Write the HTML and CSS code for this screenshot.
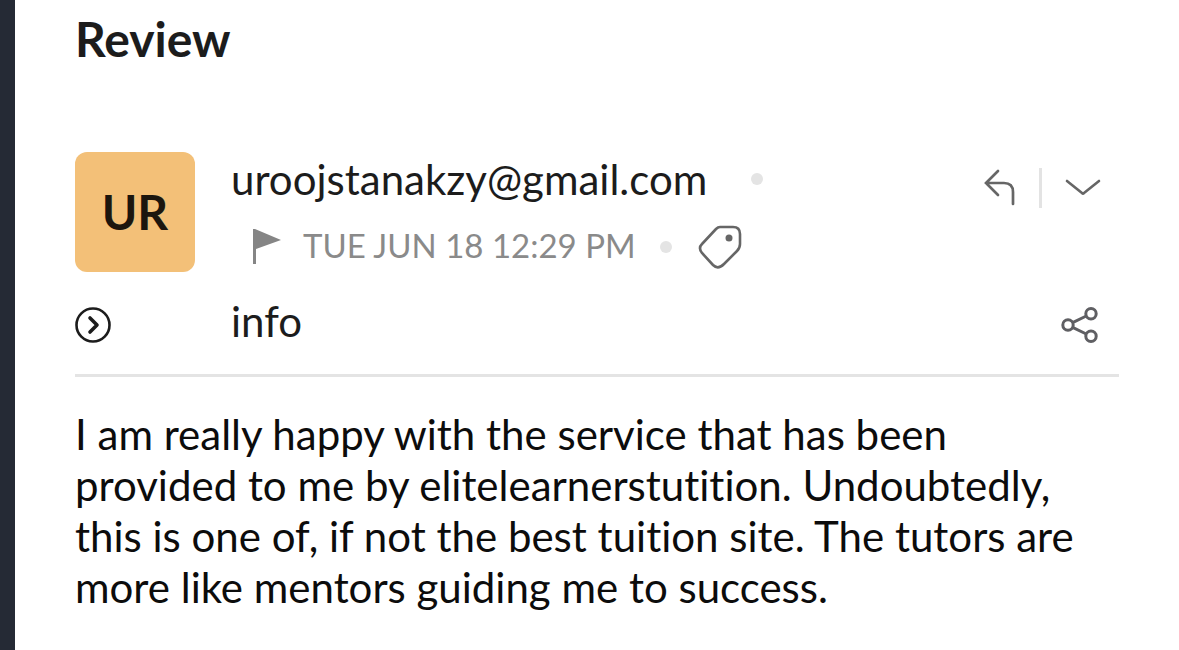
FILE: index.html
```html
<!DOCTYPE html>
<html lang="en">
<head>
<meta charset="UTF-8" />
<meta name="viewport" content="width=device-width, initial-scale=1" />
<title>Review</title>
<link rel="stylesheet" href="styles.css">
</head>
<body>

<main class="mail">
  <h1>Review</h1>

  <header class="mail-header">
    <div class="avatar">UR</div>

    <div class="sender">
      <div class="sender-line">
        <span class="address">uroojstanakzy@gmail.com</span>
        <span class="dot"></span>
      </div>
      <div class="meta-line">
        <button class="flag" aria-label="Flag">
          <svg width="28" height="36" viewBox="0 0 28 36"><path d="M0 0h2l26 11L3 20v15H0z" fill="#858585"/></svg>
        </button>
        <time>TUE JUN 18 12:29 PM</time>
        <span class="dot"></span>
        <button class="tag" aria-label="Tag">
          <svg width="44" height="44" viewBox="0 0 44 44" fill="none" stroke="#666" stroke-width="2.600"><path d="M22 2H35Q42 2 42 9V19Q42 23 39 26L26 39Q20 45 15 40L4 28Q0 23 4 19L18 4Q20 2 22 2Z"/><circle cx="31" cy="13" r="3.500" fill="#666" stroke="none"/></svg>
        </button>
      </div>
    </div>

    <div class="actions">
      <button class="reply" aria-label="Reply">
        <svg width="32" height="38" viewBox="0 0 32 38" fill="none" stroke="#666" stroke-width="2.700" stroke-linecap="round"><path d="M15 2L3 14l12 12M3 14h18q9 0 9 9v12"/></svg>
      </button>
      <button class="more" aria-label="More actions">
        <svg width="36" height="18" viewBox="0 0 36 18" fill="none" stroke="#666" stroke-width="2.600" stroke-linecap="round" stroke-linejoin="round"><path d="M2 2l15 12q1 1 2 0L34 2"/></svg>
      </button>
    </div>
  </header>

  <div class="recipient">
    <button class="expand" aria-label="Show details">
      <svg width="36" height="36" viewBox="0 0 36 36" fill="none" stroke="#1c1c1c" stroke-width="2.600" stroke-linecap="round" stroke-linejoin="round"><circle cx="18" cy="18" r="16.500"/><path d="M15 11l7 7-7 7" stroke-width="3.600"/></svg>
    </button>
    <span class="to">info</span>
    <button class="share" aria-label="Share">
      <svg width="38" height="36" viewBox="0 0 38 36" fill="none" stroke="#5f5f63" stroke-width="3"><circle cx="7" cy="18" r="5.200"/><circle cx="30" cy="6.700" r="5.200"/><circle cx="30" cy="29.300" r="5.200"/><path d="M11.600 15.600l13.700-6.600M11.600 20.400l13.700 6.600"/></svg>
    </button>
  </div>

  <p class="message">I am really happy with the service that has been provided to me by elitelearnerstutition. Undoubtedly, this is one of, if not the best tuition site. The tutors are more like mentors guiding me to success.</p>
</main>

</body>
</html>
```
FILE: styles.css
```css
* {
  box-sizing: border-box;
}
body {
  margin: 0;
  font-family: Lato, sans-serif;
  font-variant-ligatures: none;
  background: white;
  color: #1c1c1c;
}
button {
  display: flex;
  padding: 0;
  border: none;
  background: none;
  cursor: pointer;
}
.mail {
  min-height: 100vh;
  padding: 11px 60px 36px;
  border-left: 15px solid #252a35;
}
h1 {
  margin: 0 0 85px;
  font-size: 48px;
  line-height: 56px;
}
.mail-header {
  display: flex;
  align-items: flex-start;
}
.avatar {
  width: 120px;
  height: 120px;
  margin-right: 36px;
  border-radius: 12px;
  background: #f3c078;
  color: #1c160e;
  font-size: 48px;
  font-weight: bold;
  line-height: 120px;
  text-align: center;
}
.sender {
  flex: 1;
}
.sender-line {
  display: flex;
  align-items: center;
  height: 54px;
  font-size: 42px;
}
.dot {
  width: 12px;
  height: 12px;
  border-radius: 50%;
  background: #e4e4e4;
}
.sender-line .dot {
  margin-left: 44px;
}
.meta-line {
  display: flex;
  align-items: center;
  height: 82px;
  padding-left: 22px;
  font-size: 33px;
  color: #8a8a8a;
}
.flag {
  margin-right: 22px;
}
time {
  padding-bottom: 4px;
}
.meta-line .dot {
  margin: 0 26px 0 24px;
}
.actions {
  display: flex;
  align-items: center;
  padding: 16px 18px 0 0;
}
.reply {
  padding-right: 24px;
}
.more {
  height: 40px;
  padding-left: 23px;
  align-items: center;
  border-left: 3px solid #e3e3e3;
}
.recipient {
  display: flex;
  align-items: center;
  height: 89px;
  padding-bottom: 12px;
  border-bottom: 3px solid #e4e4e4;
}
.to {
  flex: 1;
  margin-left: 120px;
  padding-bottom: 8px;
  font-size: 42px;
}
.share {
  margin-right: 20px;
}
.message {
  margin: 32px 0 0;
  font-size: 42px;
  line-height: 51px;
  color: #0c0c0c;
}
```
